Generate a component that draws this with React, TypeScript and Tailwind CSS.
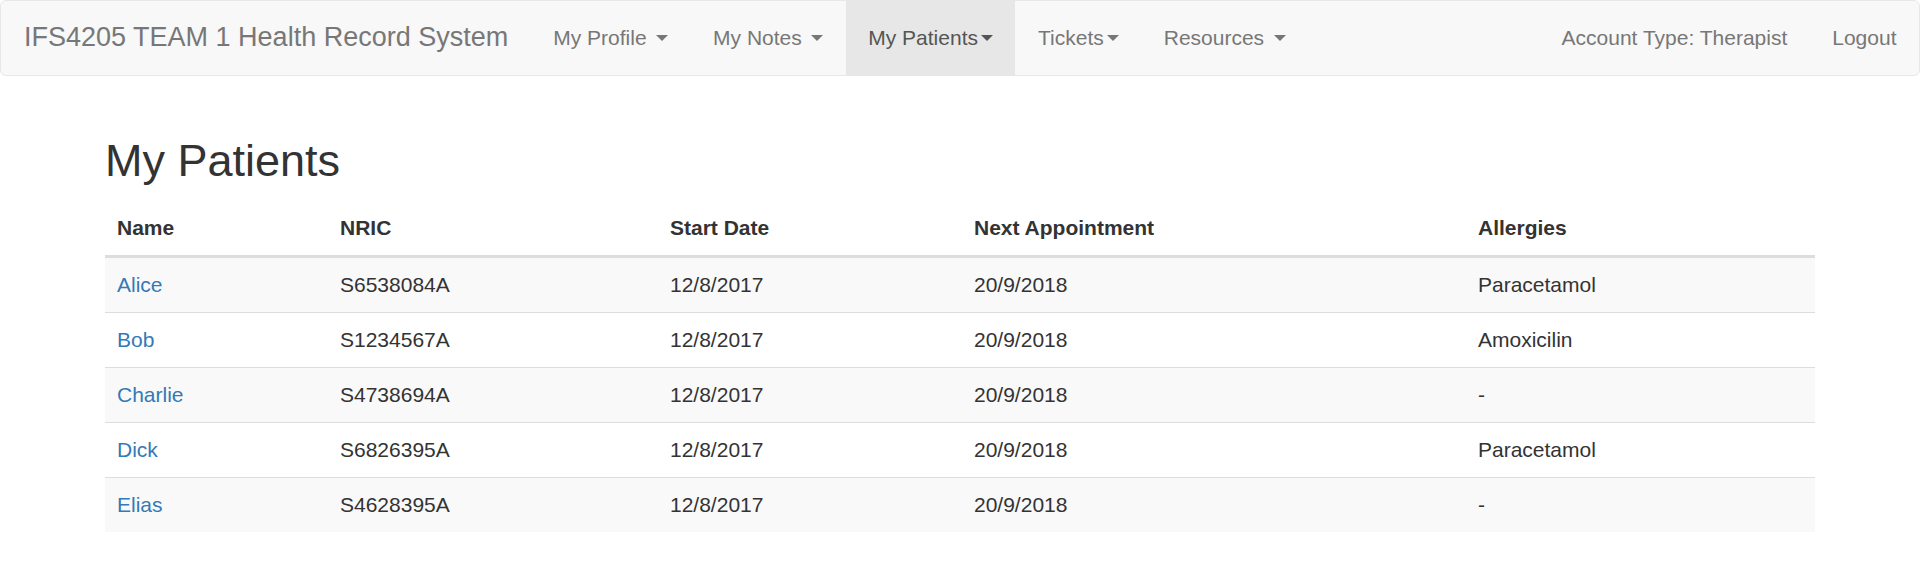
import React from "react";

const Caret = ({ space }: { space?: boolean }) => (
  <span
    className={`inline-block w-0 h-0 align-middle border-t-[6px] border-t-current border-x-[6px] border-x-transparent ${space ? "ml-[9.5px]" : "ml-[3px]"}`}
  />
);

const NavItem = ({ label, space, active, caret = true }: { label: string; space?: boolean; active?: boolean; caret?: boolean }) => (
  <div
    className={`flex items-center h-full px-[22.5px] pb-[1px] text-[21px] leading-[30px] ${active ? "bg-[#e7e7e7] text-[#555]" : "text-[#777]"}`}
  >
    <span>{label}</span>
    {caret && <Caret space={space} />}
  </div>
);

const rows = [
  { name: "Alice", nric: "S6538084A", start: "12/8/2017", next: "20/9/2018", allergies: "Paracetamol" },
  { name: "Bob", nric: "S1234567A", start: "12/8/2017", next: "20/9/2018", allergies: "Amoxicilin" },
  { name: "Charlie", nric: "S4738694A", start: "12/8/2017", next: "20/9/2018", allergies: "-" },
  { name: "Dick", nric: "S6826395A", start: "12/8/2017", next: "20/9/2018", allergies: "Paracetamol" },
  { name: "Elias", nric: "S4628395A", start: "12/8/2017", next: "20/9/2018", allergies: "-" },
];

export default function App() {
  return (
    <div className="min-h-[576px] bg-white text-[#333] font-['Liberation_Sans',Arial,sans-serif]">
      <nav className="h-[76px] flex items-stretch justify-between bg-[#f8f8f8] border border-[#e7e7e7] rounded-[6px]">
        <div className="flex items-stretch">
          <div className="flex items-center pl-[23px] pr-[22.5px] pb-[2px] text-[27px] leading-[30px] text-[#777]">
            IFS4205 TEAM 1 Health Record System
          </div>
          <NavItem label="My Profile" space />
          <NavItem label="My Notes" space />
          <NavItem label="My Patients" active />
          <NavItem label="Tickets" />
          <NavItem label="Resources" space />
        </div>
        <div className="flex items-stretch">
          <NavItem label="Account Type: Therapist" caret={false} />
          <NavItem label="Logout" caret={false} />
        </div>
      </nav>

      <div className="w-[1710px] mx-auto pt-[60px]">
        <h2 className="m-0 mb-[15px] text-[45px] leading-[49.5px] font-medium text-[#333]">My Patients</h2>
        <table className="w-full table-fixed border-collapse text-[21px] leading-[30px]">
          <thead>
            <tr>
              <th className="w-[223px] text-left font-bold p-[12px] border-b-[3px] border-[#ddd]">Name</th>
              <th className="w-[330px] text-left font-bold p-[12px] border-b-[3px] border-[#ddd]">NRIC</th>
              <th className="w-[304px] text-left font-bold p-[12px] border-b-[3px] border-[#ddd]">Start Date</th>
              <th className="w-[504px] text-left font-bold p-[12px] border-b-[3px] border-[#ddd]">Next Appointment</th>
              <th className="text-left font-bold p-[12px] border-b-[3px] border-[#ddd]">Allergies</th>
            </tr>
          </thead>
          <tbody>
            {rows.map((r, i) => (
              <tr key={r.name} className={i % 2 === 0 ? "bg-[#f9f9f9]" : ""}>
                <td className={`p-[12px] ${i > 0 ? "border-t border-[#ddd]" : ""}`}>
                  <a className="text-[#337ab7]" href="#">{r.name}</a>
                </td>
                <td className={`p-[12px] ${i > 0 ? "border-t border-[#ddd]" : ""}`}>{r.nric}</td>
                <td className={`p-[12px] ${i > 0 ? "border-t border-[#ddd]" : ""}`}>{r.start}</td>
                <td className={`p-[12px] ${i > 0 ? "border-t border-[#ddd]" : ""}`}>{r.next}</td>
                <td className={`p-[12px] ${i > 0 ? "border-t border-[#ddd]" : ""}`}>{r.allergies}</td>
              </tr>
            ))}
          </tbody>
        </table>
      </div>
    </div>
  );
}
